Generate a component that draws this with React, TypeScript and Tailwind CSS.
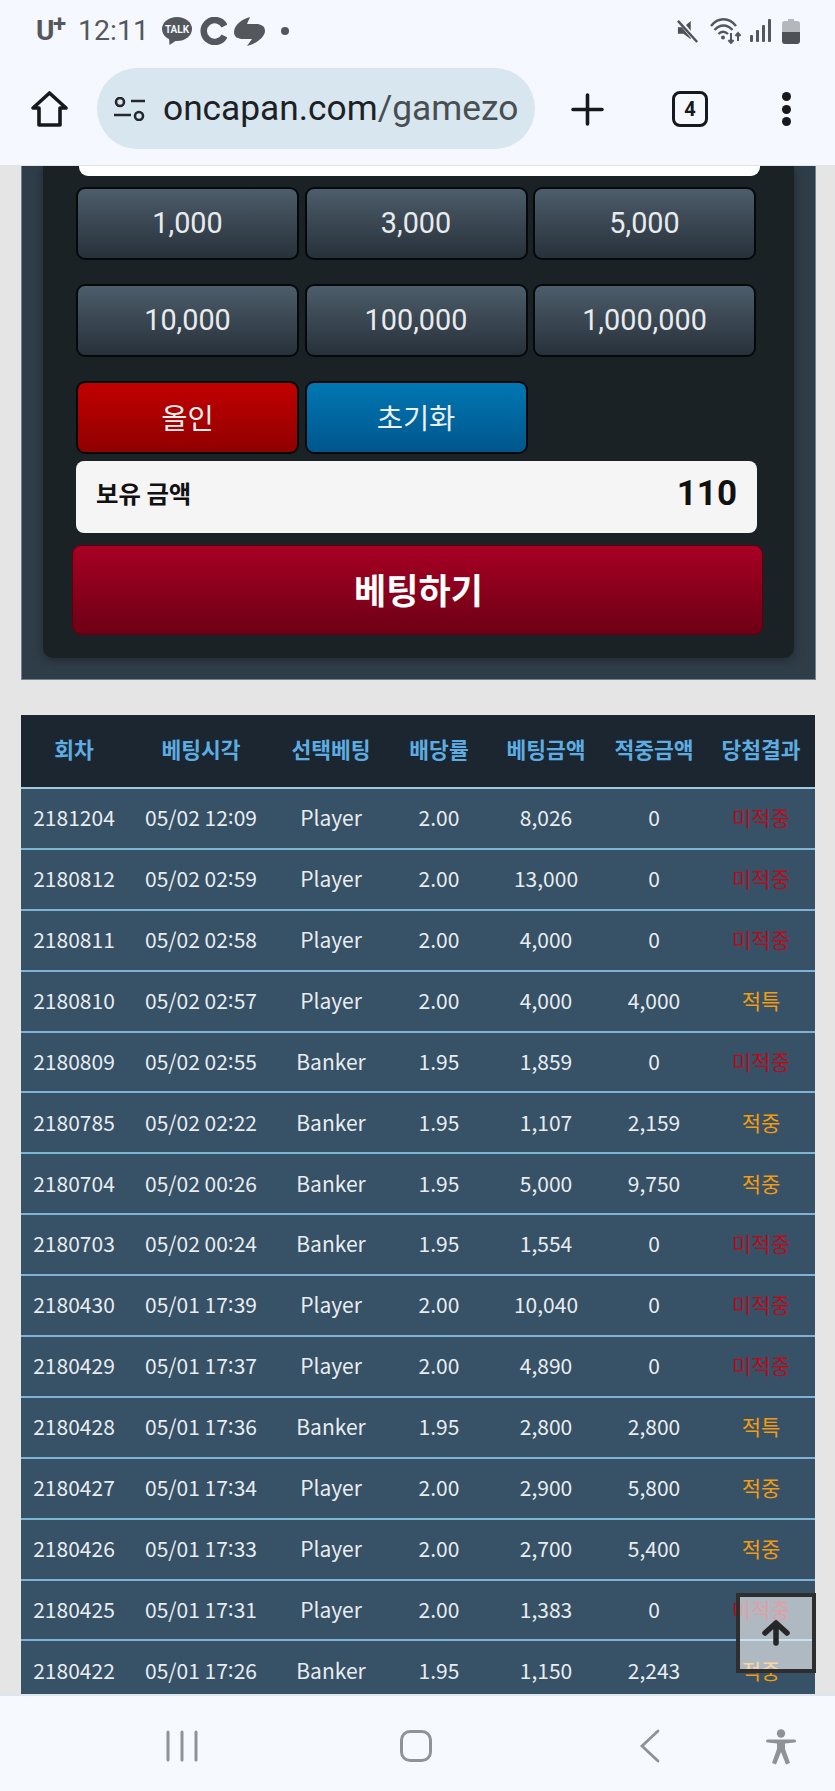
const rows: [string, string, string, string, string, string, string][] = [
  ["2181204", "05/02 12:09", "Player", "2.00", "8,026", "0", "미적중"],
  ["2180812", "05/02 02:59", "Player", "2.00", "13,000", "0", "미적중"],
  ["2180811", "05/02 02:58", "Player", "2.00", "4,000", "0", "미적중"],
  ["2180810", "05/02 02:57", "Player", "2.00", "4,000", "4,000", "적특"],
  ["2180809", "05/02 02:55", "Banker", "1.95", "1,859", "0", "미적중"],
  ["2180785", "05/02 02:22", "Banker", "1.95", "1,107", "2,159", "적중"],
  ["2180704", "05/02 00:26", "Banker", "1.95", "5,000", "9,750", "적중"],
  ["2180703", "05/02 00:24", "Banker", "1.95", "1,554", "0", "미적중"],
  ["2180430", "05/01 17:39", "Player", "2.00", "10,040", "0", "미적중"],
  ["2180429", "05/01 17:37", "Player", "2.00", "4,890", "0", "미적중"],
  ["2180428", "05/01 17:36", "Banker", "1.95", "2,800", "2,800", "적특"],
  ["2180427", "05/01 17:34", "Player", "2.00", "2,900", "5,800", "적중"],
  ["2180426", "05/01 17:33", "Player", "2.00", "2,700", "5,400", "적중"],
  ["2180425", "05/01 17:31", "Player", "2.00", "1,383", "0", "미적중"],
  ["2180422", "05/01 17:26", "Banker", "1.95", "1,150", "2,243", "적중"],
];
const headers = ["회차", "베팅시각", "선택베팅", "배당률", "베팅금액", "적중금액", "당첨결과"];
const widths = ["w-[106px]", "w-[148px]", "w-[112px]", "w-[104px]", "w-[110px]", "w-[106px]", "w-[108px]"];
const KR = "font-['Noto_Sans_CJK_KR',sans-serif]";
const RB = "font-['Roboto','Noto_Sans_CJK_KR',sans-serif]";

function Chip({ label }: { label: string }) {
  return (
    <button className={`h-[73px] rounded-[9px] border-2 border-[#06090b] bg-gradient-to-b from-[#4d5d6b] to-[#27313a] text-[28.8px] text-[#e9ebed] ${RB}`}>
      {label}
    </button>
  );
}

function StatusBar() {
  return (
    <div className="flex h-[60px] items-center justify-between pl-[36px] pr-[35px] pt-[2px] text-[#54575b]">
      <div className="flex items-center">
        <span className={`relative w-[42px] text-[28px] font-bold leading-none ${RB}`}>
          U<span className="absolute left-[17px] top-[-5px] text-[24px]">+</span>
        </span>
        <span className={`w-[71px] text-[28.5px] leading-none ${RB}`}>12:11</span>
        <svg className="ml-[13px]" width="30" height="28" viewBox="0 0 30 28">
          <ellipse cx="15" cy="12" rx="15" ry="12" fill="#54575b" />
          <path d="M7 20 L7.5 28 L15 23 Z" fill="#54575b" />
          <text x="15" y="16" textAnchor="middle" fontSize="10" fontWeight="700" fill="#f5f8fe" fontFamily="Roboto">TALK</text>
        </svg>
        <svg className="ml-[7px]" width="28" height="28" viewBox="0 0 28 28">
          <path d="M25.5 9 A 11 11 0 1 0 25.5 19" fill="none" stroke="#54575b" strokeWidth="6.5" />
        </svg>
        <svg className="ml-[7px]" width="31" height="29" viewBox="0 0 31 29">
          <path d="M16 0 C8 2 0 8 0 15 C0 20 4 22 9 22 L18 22 L13 29 C22 27 31 20 31 14 C31 9 27 7 22 7 L13 7 Z" fill="#54575b" />
        </svg>
        <span className="ml-[16px] h-[8px] w-[8px] rounded-full bg-[#54575b]" />
      </div>
      <div className="flex items-center">
        <svg width="22" height="26" viewBox="0 0 24 26">
          <path d="M1 9 L7 9 L15 2 L15 22 L7 16 L1 16 Z" fill="#4e5155" />
          <path d="M2 1 L22 25" stroke="#f5f8fe" strokeWidth="5" />
          <path d="M1 2 L22 25" stroke="#4e5155" strokeWidth="2.6" />
        </svg>
        <svg className="ml-[11px]" width="32" height="26" viewBox="0 0 32 26" fill="none" stroke="#54575b" strokeWidth="2.4">
          <path d="M1 8 C8 -1 19 -1 26 8" />
          <path d="M4.5 12 C10 6 17 6 22.5 12" />
          <path d="M8.5 16 C11 13 15 13 18 16" />
          <circle cx="13" cy="19.5" r="2" fill="#54575b" stroke="none" />
          <path d="M21 15 V25 M18.5 22 L21 25 L23.5 22 M28 23 V15 M25.5 18 L28 15 L30.5 18" strokeWidth="2" />
        </svg>
        <svg className="ml-[7px]" width="22" height="26" viewBox="0 0 22 26" fill="#54575b">
          <rect x="1" y="17" width="3" height="7" rx="1" />
          <rect x="7" y="12" width="3" height="12" rx="1" />
          <rect x="13" y="7" width="3" height="17" rx="1" />
          <rect x="19" y="1" width="3" height="23" rx="1" />
        </svg>
        <svg className="ml-[11px]" width="18" height="26" viewBox="0 0 18 26">
          <path d="M6 1 H12 V3 H15 Q18 3 18 6 V14 H0 V6 Q0 3 3 3 H6 Z" fill="#b4b7bb" />
          <path d="M0 14 H18 V23 Q18 26 15 26 H3 Q0 26 0 23 Z" fill="#4e5155" />
        </svg>
      </div>
    </div>
  );
}

function Toolbar() {
  return (
    <div className="flex h-[105px] items-start">
      <svg className="ml-[31px] mt-[31px]" width="37" height="36" viewBox="0 0 37 36" fill="none" stroke="#17191c" strokeWidth="3.6" strokeLinejoin="round">
        <path d="M2 17 L18.5 2 L35 17 H29 V34 H8 V17 Z" />
      </svg>
      <div className="ml-[29px] mt-[8px] flex h-[81px] w-[438px] items-center rounded-[41px] bg-[#d8e6ef]">
        <svg className="ml-[17px]" width="31" height="24" viewBox="0 0 31 24" fill="none" stroke="#24282c" strokeWidth="2.6">
          <circle cx="6" cy="5" r="4" />
          <path d="M17 4 H31 M0 18 H17" />
          <circle cx="25" cy="19" r="4" />
        </svg>
        <span className={`ml-[18px] whitespace-nowrap text-[35.3px] leading-none text-[#1d2126] ${RB}`}>
          oncapan.com<span className="text-[#494e53]">/gamezo</span>
        </span>
      </div>
      <svg className="ml-[36px] mt-[33px]" width="33" height="33" viewBox="0 0 33 33" stroke="#17191c" strokeWidth="3.6" strokeLinecap="round">
        <path d="M16.5 2 V31 M2 16.5 H31" />
      </svg>
      <div className={`ml-[68px] mt-[31px] flex h-[36px] w-[36px] items-center justify-center rounded-[8px] border-[3.5px] border-[#17191c] text-[20px] font-bold leading-none text-[#17191c] ${RB}`}>
        4
      </div>
      <div className="ml-[74px] mt-[32px] flex h-[34px] flex-col justify-between">
        <span className="h-[9px] w-[9px] rounded-full bg-[#17191c]" />
        <span className="h-[9px] w-[9px] rounded-full bg-[#17191c]" />
        <span className="h-[9px] w-[9px] rounded-full bg-[#17191c]" />
      </div>
    </div>
  );
}

function Panel() {
  return (
    <div className="h-[514px] w-[795px] shrink-0 border-x border-b border-[#6d8494] bg-[#2f3d48] px-[21px] pb-[21px]">
      <div className="h-full rounded-b-[10px] bg-[#1b2226] px-[33px] shadow-[0_2px_10px_rgba(0,0,0,0.35)]">
        <div className="ml-[3px] mr-[1px] h-[10px] rounded-b-[9px] bg-white" />
        <div className="mt-[11px] grid grid-cols-[223px_223px_223px] gap-x-[5.5px] gap-y-[24px]">
          {["1,000", "3,000", "5,000", "10,000", "100,000", "1,000,000"].map((v) => (
            <Chip key={v} label={v} />
          ))}
          <button className={`h-[73px] rounded-[9px] border-2 border-[#06090b] bg-gradient-to-b from-[#c10000] to-[#910000] text-[28.5px] text-[#eeeeee] ${KR}`}>올인</button>
          <button className={`h-[73px] rounded-[9px] border-2 border-[#06090b] bg-gradient-to-b from-[#0077b3] to-[#00568c] text-[28.5px] text-[#eeeeee] ${KR}`}>초기화</button>
        </div>
        <div className="mt-[7px] flex h-[72px] w-[681px] items-center justify-between rounded-[8px] bg-[#f5f5f5] pb-[7px] pl-[20px] pr-[20px] text-[#111111]">
          <span className={`text-[24.4px] font-bold leading-none ${KR}`}>보유 금액</span>
          <span className={`text-[35px] font-bold leading-none ${RB}`}>110</span>
        </div>
        <button className={`-ml-[4px] mt-[12px] h-[90px] w-[691px] rounded-[9px] border border-[#5c0010] bg-gradient-to-b from-[#a80024] to-[#6d0015] pb-[2px] pl-[2px] text-[35px] font-bold text-white ${KR}`}>
          베팅하기
        </button>
      </div>
    </div>
  );
}

function Cell({ text }: { text: string }) {
  const i = text.indexOf(":");
  if (i < 0) return <>{text}</>;
  return (
    <>
      {text.slice(0, i)}
      <span className="inline-block -translate-y-[2px]">:</span>
      {text.slice(i + 1)}
    </>
  );
}

function Table() {
  return (
    <table className={`mt-[35px] w-[794px] shrink-0 table-fixed border-collapse text-center text-[21px] text-[#e8edf1] ${KR}`}>
      <colgroup>
        {widths.map((w, i) => (
          <col key={i} className={w} />
        ))}
      </colgroup>
      <thead>
        <tr className="h-[73px] border-b-2 border-[#a3c9dc] bg-[#1b2630]">
          {headers.map((h) => (
            <th key={h} className="p-0 pb-[3px] text-[21.5px] font-bold text-[#5dade2]">{h}</th>
          ))}
        </tr>
      </thead>
      <tbody>
        {rows.map((r) => (
          <tr key={r[0]} className="h-[60.9px] border-b-2 border-[#7fb3d5] bg-[#375166]">
            {r.map((c, i) => (
              <td
                key={i}
                className={`p-0 pb-[1px] ${i === 6 ? (c === "미적중" ? "text-[#b80c1c]" : "text-[#f39c12]") : ""}`}
              >
                <Cell text={c} />
              </td>
            ))}
          </tr>
        ))}
      </tbody>
    </table>
  );
}

function NavBar() {
  return (
    <div className="relative flex h-[97px] shrink-0 items-start border-t-2 border-[#dde5ee] bg-[#f6f9fe] pt-[34px]">
      <svg className="ml-[166px]" width="32" height="32" viewBox="0 0 32 32" stroke="#8f9296" strokeWidth="3" strokeLinecap="round">
        <path d="M2 2 V30 M16 2 V30 M30 2 V30" />
      </svg>
      <div className="ml-[202px] h-[32px] w-[32px] rounded-[10px] border-[3px] border-[#8f9296]" />
      <svg className="ml-[207px] -mt-[1px]" width="22" height="34" viewBox="0 0 22 34" fill="none" stroke="#8f9296" strokeWidth="2.8" strokeLinecap="round">
        <path d="M19 2 L3 17 L19 32" />
      </svg>
      <svg className="ml-[105px] -mt-[1px]" width="30" height="36" viewBox="0 0 30 36" fill="#8f9296">
        <circle cx="15" cy="4.5" r="4.2" />
        <path d="M1.5 10.5 H28.5 Q30 10.5 30 12 Q30 13.5 28.5 13.5 L19 14.5 L19 20 L24 34 L20 35.5 L15 23 L10 35.5 L6 34 L11 20 L11 14.5 L1.5 13.5 Q0 13.5 0 12 Q0 10.5 1.5 10.5 Z" />
      </svg>
    </div>
  );
}

export default function App() {
  return (
    <div className="relative flex h-[1791px] w-[835px] flex-col overflow-hidden bg-[#e5e5e5]">
      <div className="relative z-10 h-[166px] shrink-0 border-b border-[#dfe5ea] bg-[#f5f8fe]">
        <StatusBar />
        <Toolbar />
      </div>
      <div className="flex min-h-0 flex-1 flex-col overflow-hidden pl-[21px]">
        <Panel />
        <Table />
      </div>
      <NavBar />
      <button className="absolute left-[736px] top-[1593px] flex h-[80px] w-[80px] items-center justify-center border-[4px] border-[#2e2e2e] bg-[rgba(255,255,255,0.6)]">
        <svg width="28" height="26" viewBox="0 0 28 26" fill="none" stroke="#262626" strokeWidth="5.5" strokeLinecap="round" strokeLinejoin="round">
          <path d="M14 23 V4 M3 13 L14 3 L25 13" />
        </svg>
      </button>
    </div>
  );
}
